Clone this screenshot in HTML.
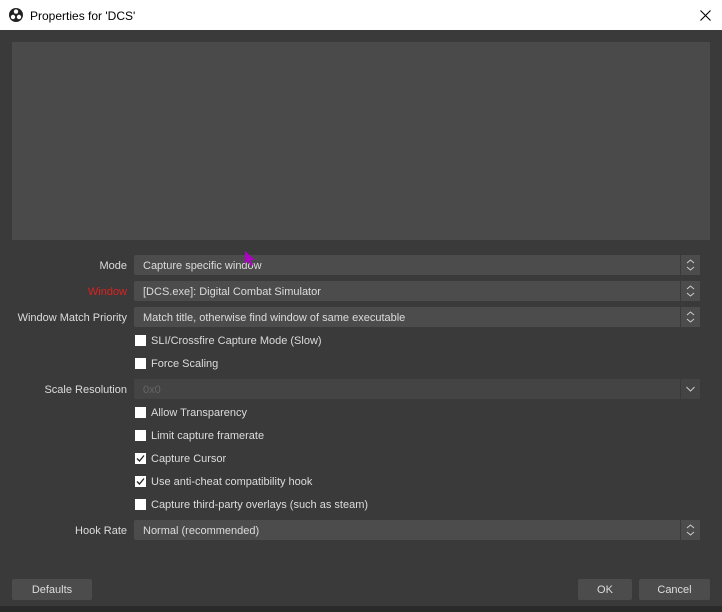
<!DOCTYPE html><html><head><style>
body{margin:0;width:722px;height:612px;background:#3a3a3a;font-family:"Liberation Sans",sans-serif;font-size:11px;color:#dcdcdc;position:relative;overflow:hidden}
.t{position:absolute;left:0;top:0;width:722px;height:30px;background:#fff;color:#000;font-size:12px}
.a{position:absolute}
.combo{position:absolute;left:134px;width:566px;height:20px;background:#4c4c4c;border-radius:2px}
.combo span{position:absolute;left:9px;top:5px}
.combo .s{position:absolute;right:0;top:0;width:19px;height:20px;border-left:1px solid #3a3a3a;background:#4c4c4c}
.lab{position:absolute;right:595px;text-align:right;white-space:nowrap}
.cb{position:absolute;left:135px;width:11px;height:11px;background:#fff}
.cl{position:absolute;left:151px;white-space:nowrap}
.btn{position:absolute;top:579px;height:21px;background:#4c4c4c;border-radius:2px;text-align:center;line-height:22px}
</style></head><body>
<div class="t">
<svg class="a" style="left:9px;top:8px" width="14" height="14" viewBox="0 0 14 14"><circle cx="7" cy="7" r="7" fill="#222"/><circle cx="7" cy="3.6" r="2.2" fill="#fff"/><circle cx="4" cy="9" r="2.2" fill="#fff"/><circle cx="10" cy="9" r="2.2" fill="#fff"/></svg>
<span class="a" style="left:30px;top:9px">Properties for 'DCS'</span>
<svg class="a" style="left:700px;top:10px" width="11" height="11"><path d="M0.5 0.5L10.5 10.5M10.5 0.5L0.5 10.5" stroke="#000" stroke-width="1.1"/></svg>
</div>
<div class="a" style="left:12px;top:42px;width:698px;height:198px;background:#4a4a4a"></div>

<div class="lab" style="top:260px">Mode</div>
<div class="combo" style="top:255px"><span>Capture specific window</span><div class="s"><svg width="19" height="20"><path d="M6 8L9.5 5L13 8M6 12L9.5 15L13 12" stroke="#ccc" fill="none"/></svg></div></div>
<div class="lab" style="top:286px;color:#e02020">Window</div>
<div class="combo" style="top:281px"><span>[DCS.exe]: Digital Combat Simulator</span><div class="s"><svg width="19" height="20"><path d="M6 8L9.5 5L13 8M6 12L9.5 15L13 12" stroke="#ccc" fill="none"/></svg></div></div>
<div class="lab" style="top:312px">Window Match Priority</div>
<div class="combo" style="top:307px"><span>Match title, otherwise find window of same executable</span><div class="s"><svg width="19" height="20"><path d="M6 8L9.5 5L13 8M6 12L9.5 15L13 12" stroke="#ccc" fill="none"/></svg></div></div>

<div class="cb" style="top:335px"></div><div class="cl" style="top:335px">SLI/Crossfire Capture Mode (Slow)</div>
<div class="cb" style="top:358px"></div><div class="cl" style="top:358px">Force Scaling</div>

<div class="lab" style="top:384px">Scale Resolution</div>
<div class="combo" style="top:379px;background:#444"><span style="color:#666">0x0</span><div class="s" style="background:#444"><svg width="19" height="20"><path d="M5.5 8L9.5 12L13.5 8" stroke="#ccc" fill="none"/></svg></div></div>

<div class="cb" style="top:407px"></div><div class="cl" style="top:407px">Allow Transparency</div>
<div class="cb" style="top:430px"></div><div class="cl" style="top:430px">Limit capture framerate</div>
<div class="cb" style="top:453px"><svg width="11" height="11"><path d="M2 5.5L4.5 8L9 2.5" stroke="#222" stroke-width="1.3" fill="none"/></svg></div><div class="cl" style="top:453px">Capture Cursor</div>
<div class="cb" style="top:476px"><svg width="11" height="11"><path d="M2 5.5L4.5 8L9 2.5" stroke="#222" stroke-width="1.3" fill="none"/></svg></div><div class="cl" style="top:476px">Use anti-cheat compatibility hook</div>
<div class="cb" style="top:499px"></div><div class="cl" style="top:499px">Capture third-party overlays (such as steam)</div>

<div class="lab" style="top:525px">Hook Rate</div>
<div class="combo" style="top:520px"><span>Normal (recommended)</span><div class="s"><svg width="19" height="20"><path d="M6 8L9.5 5L13 8M6 12L9.5 15L13 12" stroke="#ccc" fill="none"/></svg></div></div>

<div class="btn" style="left:12px;width:80px">Defaults</div>
<div class="btn" style="left:578px;width:54px">OK</div>
<div class="btn" style="left:639px;width:71px">Cancel</div>
<div class="a" style="left:0;top:606px;width:722px;height:6px;background:#2a2a2a"></div>
<svg class="a" style="left:244px;top:250px;z-index:5" width="14" height="18"><path d="M1 1L1 14L4 11L7 16L9 15L6 10L11 10Z" fill="#b000c8"/></svg>
</body></html>
